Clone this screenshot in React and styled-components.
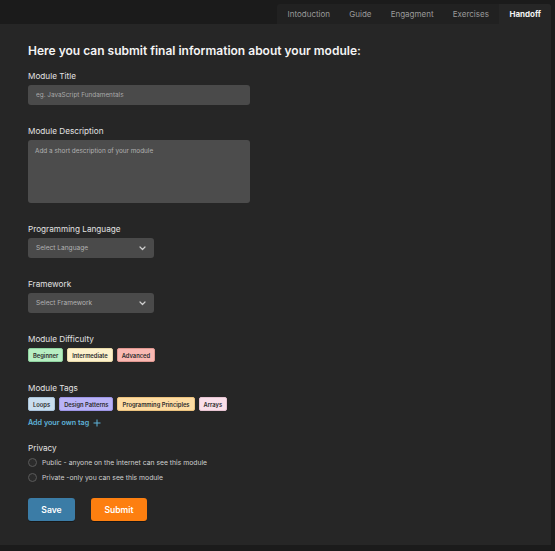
import React from 'react'
import { styled, createGlobalStyle } from 'styled-components'

const Global = createGlobalStyle`
  html, body {
    margin: 0;
    background: #1b1b1b;
    font-family: Inter, "Noto Sans", sans-serif;
  }
`

const tabs = ['Intoduction', 'Guide', 'Engagment', 'Exercises', 'Handoff']

const difficulties = [
  { label: 'Beginner', bg: '#b7eec2', border: '#8fd3a0' },
  { label: 'Intermediate', bg: '#fdf1cc', border: '#e8d9a8' },
  { label: 'Advanced', bg: '#f9b9b3', border: '#e09790' },
]

const tags = [
  { label: 'Loops', bg: '#c9ddee', border: '#a9c3da' },
  { label: 'Design Patterns', bg: '#b9b3f6', border: '#9d95e6' },
  { label: 'Programming Principles', bg: '#fedca3', border: '#ebc27e' },
  { label: 'Arrays', bg: '#f9dfe9', border: '#e6c3d1' },
]

const Chevron = () => (
  <svg width="7" height="5" viewBox="0 0 7 5" fill="none">
    <path d="M1 1l2.5 2.5L6 1" stroke="#cfcfcf" strokeWidth="1.2" strokeLinecap="round" strokeLinejoin="round" />
  </svg>
)

const Plus = () => (
  <svg width="8" height="8" viewBox="0 0 8 8" fill="none">
    <path d="M4 0.5v7M0.5 4h7" stroke="#5fb4da" strokeWidth="1" />
  </svg>
)

const App = () => {
  return (
    <Page>
      <Global />
      <TabBar>
        {tabs.map((t) => (
          <Tab key={t} $active={t === 'Handoff'}>{t}</Tab>
        ))}
      </TabBar>
      <Panel>
        <Heading>Here you can submit final information about your module:</Heading>

        <Field>
          <Label>Module Title</Label>
          <Input placeholder="eg. JavaScript Fundamentals" />
        </Field>

        <Field>
          <Label>Module Description</Label>
          <TextArea placeholder="Add a short description of your module" />
        </Field>

        <Field>
          <Label>Programming Language</Label>
          <Select>
            <span>Select Language</span>
            <Chevron />
          </Select>
        </Field>

        <Field>
          <Label>Framework</Label>
          <Select>
            <span>Select Framework</span>
            <Chevron />
          </Select>
        </Field>

        <Field>
          <Label>Module Difficulty</Label>
          <PillRow>
            {difficulties.map((d) => (
              <Pill key={d.label} $bg={d.bg} $border={d.border}>{d.label}</Pill>
            ))}
          </PillRow>
        </Field>

        <Field $gap="14px">
          <Label>Module Tags</Label>
          <PillRow>
            {tags.map((d) => (
              <Pill key={d.label} $bg={d.bg} $border={d.border}>{d.label}</Pill>
            ))}
          </PillRow>
          <AddTag>
            Add your own tag <Plus />
          </AddTag>
        </Field>

        <Field $gap="16px">
          <Label>Privacy</Label>
          <Radio>
            <Circle />
            Public - anyone on the internet can see this module
          </Radio>
          <Radio>
            <Circle />
            Private -only you can see this module
          </Radio>
        </Field>

        <Buttons>
          <Button $bg="#3b7ca6">Save</Button>
          <Button $bg="#fd7f10" $wide>Submit</Button>
        </Buttons>
      </Panel>
    </Page>
  )
}

const Page = styled.div`
  display: flex;
  flex-direction: column;
  width: 551px;
  padding-top: 4px;
  padding-bottom: 6px;
`

const TabBar = styled.nav`
  display: flex;
  align-self: flex-end;
  width: 274px;
  height: 20px;
  padding-left: 1px;
  box-sizing: border-box;
  background: #212121;
  border-radius: 3px 3px 0 0;
  overflow: hidden;
`

const Tab = styled.div`
  display: flex;
  align-items: center;
  padding: 0 ${(p) => (p.$active ? '10px' : '9.6px')};
  font-size: 8px;
  color: ${(p) => (p.$active ? '#f2f2f2' : '#9a9a9a')};
  font-weight: ${(p) => (p.$active ? 700 : 400)};
  background: ${(p) => (p.$active ? '#262626' : 'transparent')};
  margin-left: ${(p) => (p.$active ? 'auto' : '0')};
`

const Panel = styled.main`
  display: flex;
  flex-direction: column;
  height: 521px;
  box-sizing: border-box;
  background: #262626;
  padding: 19px 28px 0;
`

const Heading = styled.h1`
  margin: 0 0 11px;
  font-size: 12px;
  line-height: 16px;
  font-weight: 600;
  color: #f4f4f4;
`

const Field = styled.section`
  display: flex;
  flex-direction: column;
  align-items: flex-start;
  margin-bottom: ${(p) => p.$gap || '20px'};
`

const Label = styled.label`
  font-size: 8.2px;
  line-height: 12px;
  font-weight: 400;
  color: #e2e2e2;
  margin-bottom: 3px;
`

const Input = styled.input`
  width: 222px;
  height: 20px;
  box-sizing: border-box;
  border: none;
  outline: none;
  border-radius: 3px;
  background: #4a4a4a;
  padding: 0 8px;
  font-family: inherit;
  font-size: 6.4px;
  color: #eee;
  &::placeholder {
    color: #a9a9a9;
  }
`

const TextArea = styled.textarea`
  width: 222px;
  height: 63px;
  box-sizing: border-box;
  border: none;
  outline: none;
  resize: none;
  border-radius: 3px;
  background: #4c4c4c;
  padding: 7px 7px;
  font-family: inherit;
  font-size: 6.4px;
  color: #eee;
  &::placeholder {
    color: #b0b0b0;
  }
`

const Select = styled.div`
  display: flex;
  align-items: center;
  justify-content: space-between;
  width: 126px;
  height: 20px;
  box-sizing: border-box;
  border-radius: 3px;
  background: #4a4a4a;
  padding: 0 8px 0 8px;
  font-size: 6.6px;
  color: #b2b2b2;
`

const PillRow = styled.div`
  display: flex;
  gap: 4px;
`

const Pill = styled.span`
  display: flex;
  align-items: center;
  height: 14px;
  box-sizing: border-box;
  padding: 0 4px;
  border-radius: 2px;
  background: ${(p) => p.$bg};
  border: 1px solid ${(p) => p.$border};
  font-size: 5.8px;
  font-weight: 600;
  color: #2a2a2a;
`

const AddTag = styled.div`
  display: flex;
  align-items: center;
  gap: 4px;
  margin-top: 7px;
  font-size: 7.2px;
  line-height: 10px;
  font-weight: 600;
  color: #5fb4da;
`

const Radio = styled.div`
  display: flex;
  align-items: center;
  gap: 5px;
  height: 10px;
  font-size: 6.8px;
  color: #cfcfcf;
  & + & {
    margin-top: 5px;
  }
`

const Circle = styled.span`
  width: 9px;
  height: 9px;
  box-sizing: border-box;
  border-radius: 50%;
  border: 1px solid #5a5a5a;
  background: #2b2b2b;
`

const Buttons = styled.div`
  display: flex;
  gap: 16px;
`

const Button = styled.button`
  width: ${(p) => (p.$wide ? '56px' : '47px')};
  height: 23px;
  border: none;
  border-radius: 3px;
  background: ${(p) => p.$bg};
  box-shadow: 0 1px 0 rgba(0, 0, 0, 0.35);
  font-family: inherit;
  font-size: 8.6px;
  font-weight: 600;
  color: #fff;
`

export default App
